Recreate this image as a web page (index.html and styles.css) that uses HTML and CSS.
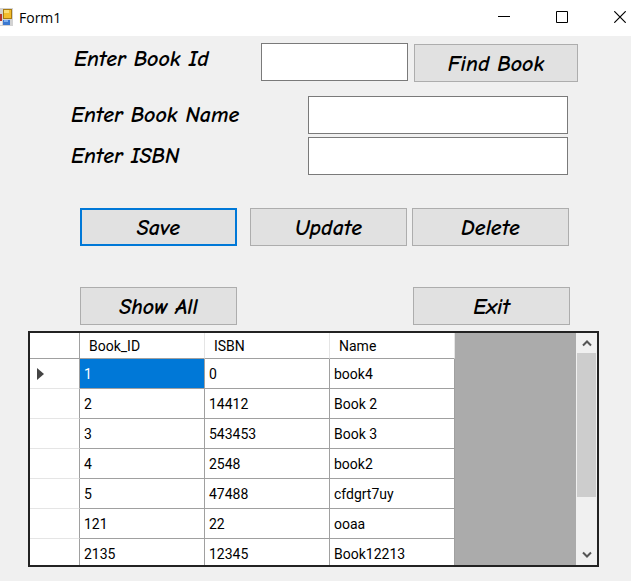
FILE: index.html
```html
<!DOCTYPE html>
<html lang="en">
<head>
<meta charset="utf-8">
<title>Form1</title>
<link rel="stylesheet" href="styles.css">
</head>
<body>
<header class="titlebar">
  <svg class="app-icon" width="13" height="18" viewBox="0 0 13 18" aria-hidden="true">
    <rect width="13" height="18" fill="#d2d2d2"/>
    <rect y="6" width="2" height="7" fill="#b5322c"/>
    <rect x="3" y="1" width="9" height="10" fill="#a87a10"/>
    <rect x="4" y="2" width="7" height="8" fill="#f3bd2c"/>
    <rect x="4" y="2" width="5" height="3" fill="#fbdc72"/>
    <rect x="3" y="12" width="7" height="5" fill="#3b78d0"/>
    <rect x="4" y="12" width="4" height="2" fill="#7fb0f0"/>
    <rect y="13" width="2" height="4" fill="#f5f5f5"/>
  </svg>
  <h1 class="title">Form1</h1>
  <div class="caption">
    <button type="button" class="caption-button" aria-label="Minimize"><svg width="12" height="12" viewBox="0 0 12 12"><path d="M0 5.5h12" stroke="#000"/></svg></button>
    <button type="button" class="caption-button" aria-label="Maximize"><svg width="12" height="12" viewBox="0 0 12 12"><path d="M.5.5h11v11H.5z" fill="none" stroke="#000"/></svg></button>
    <button type="button" class="caption-button" aria-label="Close"><svg width="12" height="12" viewBox="0 0 12 12"><path d="M.3.3l11.4 11.4M11.7.3L.3 11.7" stroke="#000" stroke-width="1.2"/></svg></button>
  </div>
</header>
<main class="form">
  <div class="row row-find">
    <label class="label" for="book-id">Enter Book Id</label>
    <input class="field field-short" id="book-id" type="text">
    <button type="button" class="button button-find">Find Book</button>
  </div>
  <div class="row row-field">
    <label class="label" for="book-name">Enter Book Name</label>
    <input class="field field-long" id="book-name" type="text">
  </div>
  <div class="row row-field">
    <label class="label" for="isbn">Enter ISBN</label>
    <input class="field field-long" id="isbn" type="text">
  </div>
  <div class="row row-edit">
    <button type="button" class="button button-default">Save</button>
    <div class="button-pair">
      <button type="button" class="button">Update</button>
      <button type="button" class="button">Delete</button>
    </div>
  </div>
  <div class="row row-show">
    <button type="button" class="button">Show All</button>
    <button type="button" class="button">Exit</button>
  </div>
  <div class="datagrid">
    <div class="viewport">
      <table class="table">
        <thead>
          <tr><td class="corner"></td><th scope="col">Book_ID</th><th scope="col">ISBN</th><th scope="col">Name</th></tr>
        </thead>
        <tbody>
          <tr><td class="marker"><svg width="7" height="12" viewBox="0 0 7 12" aria-hidden="true"><path d="M0 0l7 6-7 6z" fill="#444"/></svg></td><td class="selected">1</td><td>0</td><td>book4</td></tr>
          <tr><td class="marker"></td><td>2</td><td>14412</td><td>Book 2</td></tr>
          <tr><td class="marker"></td><td>3</td><td>543453</td><td>Book 3</td></tr>
          <tr><td class="marker"></td><td>4</td><td>2548</td><td>book2</td></tr>
          <tr><td class="marker"></td><td>5</td><td>47488</td><td>cfdgrt7uy</td></tr>
          <tr><td class="marker"></td><td>121</td><td>22</td><td>ooaa</td></tr>
          <tr><td class="marker"></td><td>2135</td><td>12345</td><td>Book12213</td></tr>
        </tbody>
      </table>
    </div>
    <div class="scrollbar">
      <button type="button" class="scroll-button" aria-label="Scroll up"><svg width="10" height="8" viewBox="0 0 10 8"><path d="M1 6.500L5 2.500l4 4" fill="none" stroke="#555" stroke-width="2"/></svg></button>
      <div class="track"><div class="thumb"></div></div>
      <button type="button" class="scroll-button" aria-label="Scroll down"><svg width="10" height="8" viewBox="0 0 10 8"><path d="M1 1.500l4 4 4-4" fill="none" stroke="#555" stroke-width="2"/></svg></button>
    </div>
  </div>
</main>
</body>
</html>
```
FILE: styles.css
```css
* {
  box-sizing: border-box;
}

body {
  margin: 0;
  height: 100vh;
  display: flex;
  flex-direction: column;
  overflow: hidden;
  background: #f0f0f0;
  color: #000;
  font-family: Roboto, "Liberation Sans", sans-serif;
  font-size: 14px;
}

button {
  margin: 0;
  padding: 0;
  border: 0;
  background: none;
  color: inherit;
}

svg {
  display: block;
}

.titlebar {
  flex: none;
  display: flex;
  align-items: center;
  height: 36px;
  padding-bottom: 2px;
  overflow: hidden;
  background: #fff;
}

.app-icon {
  flex: none;
}

.title {
  flex: 1;
  margin: 0 0 0 6px;
  font-family: "Open Sans", "Noto Sans", sans-serif;
  font-size: 14px;
  font-weight: 400;
}

.caption {
  display: flex;
  margin-right: -18px;
}

.caption-button {
  display: grid;
  place-items: center;
  width: 58px;
  height: 34px;
}

.form {
  flex: 1;
  min-height: 0;
  display: flex;
  flex-direction: column;
  padding: 7px 32px 14px 28px;
}

.row {
  flex: none;
  display: flex;
  align-items: center;
}

.label,
.button {
  font-family: "Comic Sans MS", "Comic Neue", "Noto Sans", sans-serif;
  font-size: 22px;
  font-style: italic;
  font-weight: 700;
  line-height: 32px;
}

.label {
  flex: 1;
}

.field {
  height: 38px;
  padding: 0 6px;
  border: 1px solid #7a7a7a;
  background: #fff;
  font: inherit;
}

.field-short {
  width: 147px;
}

.field-long {
  width: 260px;
}

.button {
  flex: 0 0 157px;
  height: 38px;
  padding-top: 2px;
  border: 1px solid #adadad;
  background: #e1e1e1;
}

.button-find {
  flex-basis: 164px;
  margin-top: 1px;
}

.button-default {
  border: 2px solid #0078d7;
}

.row-find {
  align-items: flex-start;
  gap: 6px;
  margin-bottom: 14px;
  padding: 0 21px 0 46px;
}

.row-field {
  margin-bottom: 3px;
  padding: 0 31px 0 43px;
}

.row-edit {
  justify-content: space-between;
  margin: 30px 0 41px;
  padding: 0 30px 0 52px;
}

.button-pair {
  display: flex;
  gap: 5px;
}

.row-show {
  justify-content: space-between;
  margin-bottom: 6px;
  padding: 0 29px 0 52px;
}

.datagrid {
  flex: 1;
  min-height: 0;
  display: flex;
  border: 2px solid #222;
}

.viewport {
  flex: 1;
  overflow: hidden;
  background: #ababab;
}

.table {
  width: 425px;
  table-layout: fixed;
  border-collapse: separate;
  border-spacing: 0;
  background: #fff;
}

.table th,
.table td {
  height: 30px;
  padding: 0 4px;
  border-right: 1px solid #a0a0a0;
  border-bottom: 1px solid #a0a0a0;
  font-weight: 400;
  text-align: left;
}

.table thead th,
.table thead td {
  height: 26px;
  border-right-color: #e5e5e5;
}

.table thead th {
  padding-left: 9px;
}

.table thead .corner {
  width: 50px;
  border-right-color: #a0a0a0;
}

.table .marker {
  padding-left: 7px;
  border-bottom-color: #e5e5e5;
}

.table .selected {
  background: #0078d7;
  color: #fff;
}

.scrollbar {
  flex: none;
  display: flex;
  flex-direction: column;
  width: 21px;
  padding: 0 1px;
  background: #f0f0f0;
}

.scroll-button {
  display: grid;
  place-items: center;
  height: 20px;
}

.track {
  flex: 1;
}

.thumb {
  height: 75%;
  background: #cdcdcd;
}
```
